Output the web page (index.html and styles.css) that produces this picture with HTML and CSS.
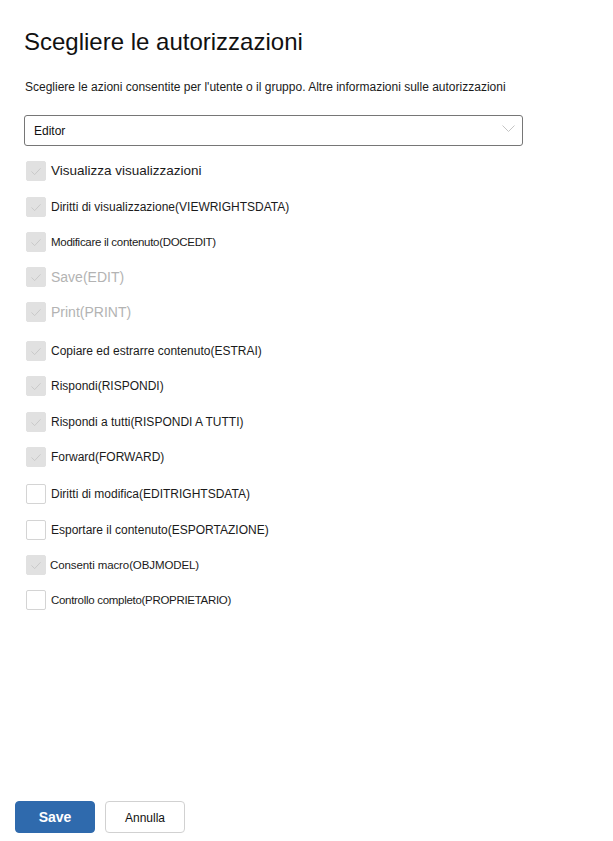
FILE: index.html
```html
<!DOCTYPE html>
<html lang="it">
<head>
<meta charset="utf-8">
<title>Scegliere le autorizzazioni</title>
<link rel="stylesheet" href="styles.css">
</head>
<body>
<div class="page">
  <div class="content">
    <h1 class="title">Scegliere le autorizzazioni</h1>
    <p class="subtitle">Scegliere le azioni consentite per l'utente o il gruppo. Altre informazioni sulle autorizzazioni</p>
    <div class="select">
      <span class="select-value">Editor</span>
      <svg class="chevron" width="13" height="8" viewBox="0 0 13 8"><path d="M0.5 0.5 L6.5 6.5 L12.5 0.5" fill="none" stroke="#c4c4c4" stroke-width="1"/></svg>
    </div>
    <ul class="perms">
      <li class="row"><span class="box checked"><svg viewBox="0 0 20 20"><path d="M5 10.5 L8.5 14 L15 7" fill="none" stroke="#c6c6c6" stroke-width="1"/></svg></span><span class="label first">Visualizza visualizzazioni</span></li>
      <li class="row plus1"><span class="box checked"><svg viewBox="0 0 20 20"><path d="M5 10.5 L8.5 14 L15 7" fill="none" stroke="#c6c6c6" stroke-width="1"/></svg></span><span class="label">Diritti di visualizzazione(VIEWRIGHTSDATA)</span></li>
      <li class="row"><span class="box checked"><svg viewBox="0 0 20 20"><path d="M5 10.5 L8.5 14 L15 7" fill="none" stroke="#c6c6c6" stroke-width="1"/></svg></span><span class="label small">Modificare il contenuto(DOCEDIT)</span></li>
      <li class="row"><span class="box checked"><svg viewBox="0 0 20 20"><path d="M5 10.5 L8.5 14 L15 7" fill="none" stroke="#c6c6c6" stroke-width="1"/></svg></span><span class="label large disabled">Save(EDIT)</span></li>
      <li class="row"><span class="box checked"><svg viewBox="0 0 20 20"><path d="M5 10.5 L8.5 14 L15 7" fill="none" stroke="#c6c6c6" stroke-width="1"/></svg></span><span class="label large disabled">Print(PRINT)</span></li>
      <li class="row plus4"><span class="box checked"><svg viewBox="0 0 20 20"><path d="M5 10.5 L8.5 14 L15 7" fill="none" stroke="#c6c6c6" stroke-width="1"/></svg></span><span class="label">Copiare ed estrarre contenuto(ESTRAI)</span></li>
      <li class="row"><span class="box checked"><svg viewBox="0 0 20 20"><path d="M5 10.5 L8.5 14 L15 7" fill="none" stroke="#c6c6c6" stroke-width="1"/></svg></span><span class="label">Rispondi(RISPONDI)</span></li>
      <li class="row plus1"><span class="box checked"><svg viewBox="0 0 20 20"><path d="M5 10.5 L8.5 14 L15 7" fill="none" stroke="#c6c6c6" stroke-width="1"/></svg></span><span class="label">Rispondi a tutti(RISPONDI A TUTTI)</span></li>
      <li class="row"><span class="box checked"><svg viewBox="0 0 20 20"><path d="M5 10.5 L8.5 14 L15 7" fill="none" stroke="#c6c6c6" stroke-width="1"/></svg></span><span class="label">Forward(FORWARD)</span></li>
      <li class="row plus2"><span class="box"></span><span class="label">Diritti di modifica(EDITRIGHTSDATA)</span></li>
      <li class="row plus1"><span class="box"></span><span class="label">Esportare il contenuto(ESPORTAZIONE)</span></li>
      <li class="row"><span class="box checked"><svg viewBox="0 0 20 20"><path d="M5 10.5 L8.5 14 L15 7" fill="none" stroke="#c6c6c6" stroke-width="1"/></svg></span><span class="label small tight">Consenti macro(OBJMODEL)</span></li>
      <li class="row"><span class="box"></span><span class="label small">Controllo completo(PROPRIETARIO)</span></li>
    </ul>
  </div>
  <div class="footer">
    <button class="btn primary">Save</button>
    <button class="btn secondary">Annulla</button>
  </div>
</div>
</body>
</html>
```

FILE: styles.css
```css
* { box-sizing: border-box; }
html, body {
  margin: 0;
  padding: 0;
  background: #ffffff;
}
body {
  font-family: "Liberation Sans", Arial, sans-serif;
  color: #1b1b1b;
}
.page {
  min-height: 841px;
  display: flex;
  flex-direction: column;
}
.content {
  padding: 0 90px 0 24px;
}
.title {
  margin: 27px 0 0 0;
  font-size: 24px;
  font-weight: 400;
  line-height: 30px;
  color: #111;
}
.subtitle {
  margin: 22px 0 0 1px;
  font-size: 12px;
  line-height: 16px;
  color: #1b1b1b;
}
.select {
  margin-top: 20px;
  height: 31px;
  border: 1px solid #767676;
  border-radius: 3px;
  display: flex;
  align-items: center;
  justify-content: space-between;
  padding: 1px 7px 0 9px;
  width: 499px;
}
.select-value {
  font-size: 12px;
  color: #111;
}
.chevron { display: block; margin-top: -4px; }
.perms {
  list-style: none;
  margin: 7px 0 0 0;
  padding: 0;
}
.row {
  height: 35px;
  display: flex;
  align-items: center;
  gap: 5px;
  padding-left: 2px;
}
.row.plus1 { margin-top: 1px; }
.row.plus2 { margin-top: 2px; }
.row.plus4 { margin-top: 4px; }
.box {
  width: 20px;
  height: 20px;
  border-radius: 2px;
  border: 1px solid #d4d4d4;
  background: #fff;
  flex: none;
}
.box.checked {
  background: #e1e1e1;
  border-color: #e1e1e1;
}
.box svg { display: block; width: 18px; height: 18px; }
.label {
  font-size: 12px;
  color: #1b1b1b;
}
.label.first { font-size: 13.5px; }
.label.small { font-size: 11.5px; letter-spacing: -0.3px; }
.label.large { font-size: 14px; }
.label.disabled { color: #b3b3b3; }
.label.tight { margin-left: -1px; letter-spacing: -0.1px; }
.footer {
  margin-top: auto;
  padding: 0 0 8px 15px;
  display: flex;
  gap: 10px;
}
.btn {
  width: 80px;
  height: 32px;
  border-radius: 4px;
  font-family: "Liberation Sans", Arial, sans-serif;
  cursor: pointer;
}
.btn.primary {
  background: #2f6aad;
  border: 1px solid #2f6aad;
  color: #fff;
  font-weight: 700;
  font-size: 14px;
}
.btn.secondary {
  background: #fff;
  border: 1px solid #d1d1d1;
  color: #111;
  font-size: 12px;
  padding-top: 3px;
}
```
